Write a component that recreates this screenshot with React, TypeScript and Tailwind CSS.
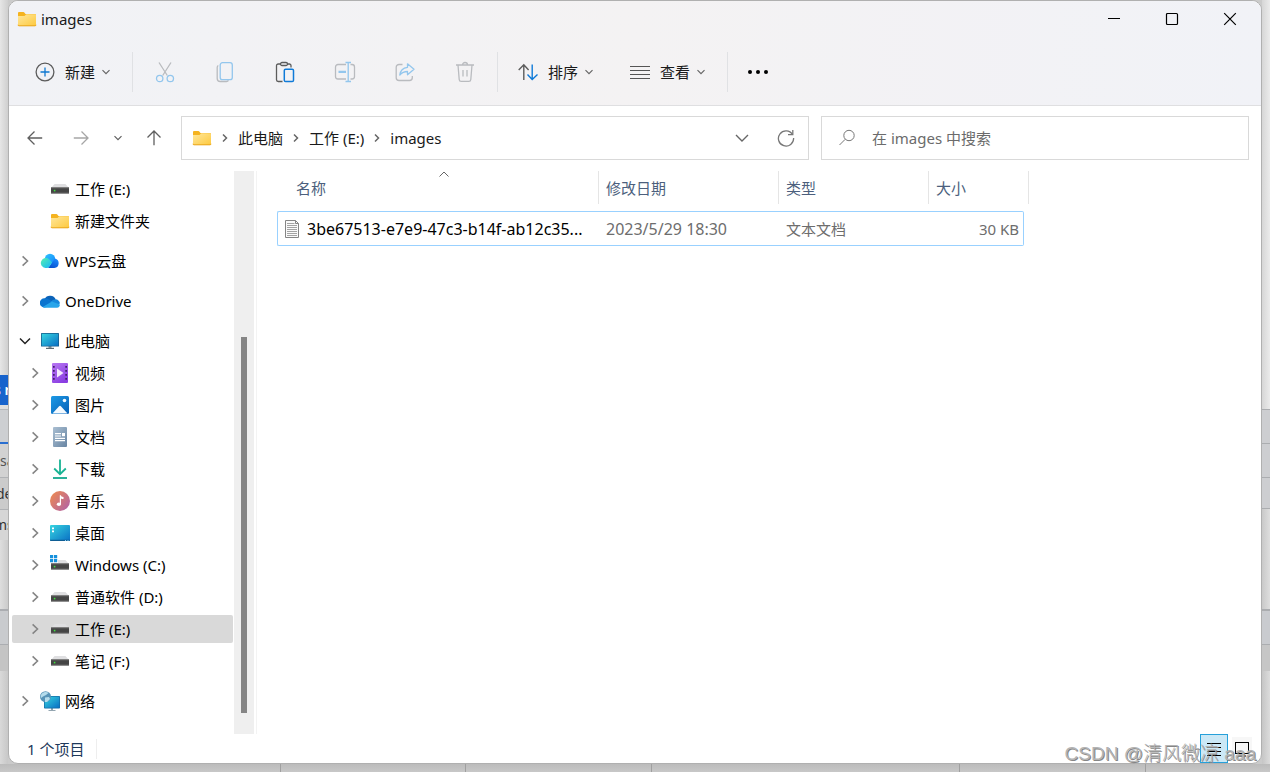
import React from "react";

type IconProps = { className?: string };

const Folder = () => (
  <svg width="20" height="20" viewBox="0 0 20 20" className="shrink-0" aria-hidden="true">
    <defs>
      <linearGradient id="folderFront" x1="0" y1="0" x2="1" y2="1">
        <stop offset="0" stopColor="#ffe79b" />
        <stop offset="1" stopColor="#fdc93f" />
      </linearGradient>
    </defs>
    <path d="M1 4a1 1 0 0 1 1-1h4.5a1 1 0 0 1 .8.4L8.5 5H18a1 1 0 0 1 1 1v4H1z" fill="#f5b31f" />
    <path d="M1 7h6.5l1.8-1.7H18.4a.6.6 0 0 1 .6.6V16a1 1 0 0 1-1 1H2a1 1 0 0 1-1-1z" fill="url(#folderFront)" />
    <path d="M1 15.8a1 1 0 0 0 1 1h16a1 1 0 0 0 1-1" fill="none" stroke="#e9a51c" />
  </svg>
);

const DriveShape = () => (
  <>
    <path d="M4.600 5h10.800L19 9H1z" fill="#dfdfe1" />
    <rect x="1" y="8" width="18" height="7" rx="0.600" fill="#454545" />
    <rect x="1" y="8" width="18" height="1.200" fill="#808080" />
    <rect x="1" y="13.800" width="18" height="1.200" fill="#8f8f8f" />
    <rect x="3.800" y="10.800" width="1.600" height="1.600" fill="#3fe03f" />
  </>
);

const Drive = () => (
  <svg width="20" height="20" viewBox="0 0 20 20" className="shrink-0" aria-hidden="true">
    <DriveShape />
  </svg>
);

const WindowsDrive = () => (
  <svg width="20" height="20" viewBox="0 0 20 20" className="shrink-0" aria-hidden="true">
    <DriveShape />
    <path d="M0 0h8v8H0z" fill="#fff" />
    <path d="M0 0h3.200v3.200H0zM4 0h3.200v3.200H4zM0 4h3.200v3.200H0zM4 4h3.200v3.200H4z" fill="#1590dc" />
  </svg>
);

const WpsCloud = () => (
  <svg width="20" height="20" viewBox="0 0 20 20" className="shrink-0" aria-hidden="true">
    <defs>
      <linearGradient id="wpsTop" x1="0" y1="0" x2="1" y2="1">
        <stop offset="0" stopColor="#30c4ff" />
        <stop offset="1" stopColor="#1285fa" />
      </linearGradient>
      <linearGradient id="wpsLeft" x1="0" y1="0" x2="1" y2="1">
        <stop offset="0" stopColor="#56efb0" />
        <stop offset="1" stopColor="#13b5fb" />
      </linearGradient>
      <linearGradient id="wpsRight" x1="0.8" y1="0" x2="0.3" y2="1">
        <stop offset="0" stopColor="#1b8cff" />
        <stop offset="1" stopColor="#0750cf" />
      </linearGradient>
    </defs>
    <circle cx="10" cy="8" r="5.2" fill="url(#wpsTop)" />
    <path d="M8 17l7-9.6a4.9 4.9 0 0 1-.6 9.6z" fill="url(#wpsRight)" />
    <path d="M5.4 17A5 5 0 1 1 9.3 8.4l2.9 3.2L9 16a3 3 0 0 1-2 1z" fill="url(#wpsLeft)" />
  </svg>
);

const OneDrive = () => (
  <svg width="20" height="20" viewBox="0 0 20 20" className="shrink-0" aria-hidden="true">
    <path d="M4.500 8A6.200 6.200 0 0 1 15.800 8.600L10 12z" fill="#0b62b8" />
    <path d="M4.200 16.500A4.500 4.500 0 0 1 4.600 7.300c1.500-.2 3 .3 4.100 1l6 3.600L7 16z" fill="#0b74cf" />
    <path d="M15 8.400a4.400 4.400 0 0 1 5 4.200L15 14.400 10.500 11c1-1.500 2.600-2.600 4.500-2.600z" fill="#1688dc" />
    <path d="M2.600 16L12 10.400l7.900 3.200A3.200 3.200 0 0 1 17 16.800H4.500a4 4 0 0 1-1.900-.8z" fill="#28a5ea" />
  </svg>
);

const ScreenGradient = ({ id }: { id: string }) => (
  <defs>
    <linearGradient id={id} x1="0" y1="0" x2="1" y2="1">
      <stop offset="0" stopColor="#36d5e0" />
      <stop offset="1" stopColor="#0a6fc4" />
    </linearGradient>
  </defs>
);

const Monitor = () => (
  <svg width="20" height="20" viewBox="0 0 20 20" className="shrink-0" aria-hidden="true">
    <ScreenGradient id="monitor" />
    <path d="M8.500 15h3v2h-3z" fill="#8a959c" />
    <path d="M6 16.800h8v1.200H6z" fill="#5e6a72" />
    <rect x="1" y="2" width="18" height="13.500" rx="0.600" fill="#17608f" />
    <rect x="1.800" y="2.800" width="16.400" height="12" fill="url(#monitor)" />
  </svg>
);

const Video = () => (
  <svg width="20" height="20" viewBox="0 0 20 20" className="shrink-0" aria-hidden="true">
    <defs>
      <linearGradient id="video" x1="0" y1="0" x2="0.600" y2="1">
        <stop offset="0" stopColor="#b878f2" />
        <stop offset="1" stopColor="#8a3ee2" />
      </linearGradient>
    </defs>
    <rect x="2" y="0" width="16" height="20" rx="1" fill="url(#video)" />
    <path
      d="M3 3h1.700v1.700H3zM3 7h1.700v1.700H3zM3 11h1.700v1.700H3zM3 15h1.700v1.700H3zM15.300 3H17v1.700h-1.700zM15.300 7H17v1.700h-1.700zM15.300 11H17v1.700h-1.700zM15.300 15H17v1.700h-1.700z"
      fill="#42206b"
    />
    <path d="M7 5.500v9l6.500-4.500z" fill="#f3e8fc" />
  </svg>
);

const Picture = () => (
  <svg width="20" height="20" viewBox="0 0 20 20" className="shrink-0" aria-hidden="true">
    <defs>
      <linearGradient id="picture" x1="0" y1="0" x2="1" y2="1">
        <stop offset="0" stopColor="#1c9ae6" />
        <stop offset="1" stopColor="#0860b6" />
      </linearGradient>
    </defs>
    <rect x="1" y="1" width="18" height="18" rx="1.500" fill="url(#picture)" />
    <path d="M2.500 18.500l6.600-7.300a1.200 1.200 0 0 1 1.800 0l6.600 7.300z" fill="#f4faff" />
    <circle cx="14.500" cy="5.500" r="1.800" fill="#f4faff" />
  </svg>
);

const DocumentIcon = () => (
  <svg width="20" height="20" viewBox="0 0 20 20" className="shrink-0" aria-hidden="true">
    <defs>
      <linearGradient id="document" x1="0" y1="0" x2="1" y2="1">
        <stop offset="0" stopColor="#aabfd2" />
        <stop offset="1" stopColor="#6885a3" />
      </linearGradient>
    </defs>
    <rect x="3" y="0" width="14" height="20" rx="1" fill="url(#document)" />
    <path d="M5 6h6v1.200H5zM5 8.400h6v1.200H5zM5 10.700h10v1.200H5zM5 13h10v1.200H5zM12 6h3v3.200h-3z" fill="#fff" />
  </svg>
);

const Download = () => (
  <svg width="20" height="20" viewBox="0 0 20 20" className="shrink-0" aria-hidden="true">
    <path d="M10 .500V15M4.200 9.500l5.800 5.700 5.800-5.700" fill="none" stroke="#19b394" strokeWidth="1.800" />
    <path d="M3 19h14" stroke="#14a78e" strokeWidth="1.800" />
  </svg>
);

const Music = () => (
  <svg width="20" height="20" viewBox="0 0 20 20" className="shrink-0" aria-hidden="true">
    <defs>
      <linearGradient id="music" x1="0" y1="0.100" x2="1" y2="0.900">
        <stop offset="0" stopColor="#ee8a50" />
        <stop offset="1" stopColor="#b062a8" />
      </linearGradient>
    </defs>
    <circle cx="10" cy="10" r="10" fill="url(#music)" />
    <ellipse cx="8.900" cy="13.200" rx="2.100" ry="1.800" fill="#fff" />
    <path d="M9.800 4.300h1.200c0 1.300.8 1.700 2.500 1.700v2c-1.100 0-2-.2-2.500-.6v5.800H9.800z" fill="#fff" />
  </svg>
);

const Desktop = () => (
  <svg width="20" height="20" viewBox="0 0 20 20" className="shrink-0" aria-hidden="true">
    <ScreenGradient id="desktop" />
    <rect x="0" y="2" width="20" height="16" rx="1" fill="url(#desktop)" />
    <path d="M2 4.500h2v1.700H2zM2 7.500h2v1.700H2z" fill="#fff" />
    <path d="M0 16.800h20V17a1 1 0 0 1-1 1H1a1 1 0 0 1-1-1z" fill="#0f5e94" />
    <path d="M15 17h1v1h-1zM17.500 17h1v1h-1z" fill="#8fd0f4" />
  </svg>
);

const Network = () => (
  <svg width="20" height="20" viewBox="0 0 20 20" className="shrink-0" aria-hidden="true">
    <ScreenGradient id="network" />
    <path d="M11 17h2v2h2.500v1h-7v-1H11z" fill="#93a5b0" />
    <rect x="4" y="5" width="16" height="12.500" rx="0.800" fill="#146da5" />
    <rect x="4.700" y="5.700" width="14.600" height="11" fill="url(#network)" />
    <circle cx="5.500" cy="5.700" r="5.500" fill="#5794b8" />
    <path d="M2 2.500C4 .500 7 .500 8.500 2L6 4 3 5.500 1 7C.3 5 1 3.500 2 2.500zM5 6.500l4-.5 1 2-3 3H5z" fill="#b4dcec" />
  </svg>
);

const TextFile = () => (
  <svg width="16" height="20" viewBox="0 0 16 20" className="shrink-0" aria-hidden="true">
    <path d="M1.500 1.500h10l3 3v14h-13z" fill="#fafafa" stroke="#858585" />
    <path d="M11.500 1.500v3h3" fill="none" stroke="#858585" />
    <path d="M3 4.500h7.500M3 6.500h10M3 8.500h10M3 10.500h10M3 12.500h10M3 14.500h10M3 16.500h10" stroke="#a3a3a3" />
  </svg>
);

const ChevronDown = ({ className }: IconProps) => (
  <svg width="12" height="12" viewBox="0 0 12 12" className={className} fill="none" stroke="currentColor" aria-hidden="true">
    <path d="M2.500 4.200L6 7.700l3.500-3.500" strokeWidth="1.200" />
  </svg>
);

const ChevronRight = ({ className }: IconProps) => (
  <svg width="12" height="12" viewBox="0 0 12 12" className={className} fill="none" stroke="currentColor" aria-hidden="true">
    <path d="M3.600 1.300L8.500 6l-4.900 4.700" strokeWidth="1.600" />
  </svg>
);

const line = { width: 22, height: 22, viewBox: "0 0 22 22", fill: "none", strokeWidth: 1.3 } as const;

const NewIcon = () => (
  <svg {...line} width={20} height={20} viewBox="0 0 20 20" aria-hidden="true">
    <circle cx="10" cy="10" r="8.900" stroke="#5c5c5c" />
    <path d="M10 5.500v9M5.500 10h9" stroke="#0f78d0" />
  </svg>
);

const CutIcon = () => (
  <svg {...line} aria-hidden="true">
    <path d="M5 1.500l8.300 13M17 1.500l-8.300 13" stroke="#b9bbbf" />
    <circle cx="5.700" cy="17.500" r="3.200" stroke="#93c6ed" />
    <circle cx="16.300" cy="17.500" r="3.200" stroke="#93c6ed" />
  </svg>
);

const CopyIcon = () => (
  <svg {...line} aria-hidden="true">
    <path d="M4.300 4.500c-.8.500-1.100 1.200-1.100 2v11a3 3 0 0 0 3 3h6.300c.9 0 1.600-.4 2-1.100" stroke="#b9bbbf" />
    <rect x="6.200" y="1.700" width="12.100" height="17" rx="2.300" stroke="#93c6ed" />
  </svg>
);

const PasteIcon = () => (
  <svg {...line} aria-hidden="true">
    <path d="M7 3H4.200A1.700 1.700 0 0 0 2.500 4.700v14.100a1.700 1.700 0 0 0 1.700 1.700h4.300M13.500 3h1.800A1.700 1.700 0 0 1 17 4.700v1.800" stroke="#5c5c5c" />
    <rect x="6.500" y="1.500" width="7" height="3" rx="1.500" stroke="#5c5c5c" />
    <rect x="10.300" y="8.200" width="9.200" height="12.300" rx="1.300" stroke="#0f7ad8" strokeWidth="1.500" />
  </svg>
);

const RenameIcon = () => (
  <svg {...line} aria-hidden="true">
    <path d="M12 3.500H4a2.500 2.500 0 0 0-2.500 2.500v9.500A2.500 2.500 0 0 0 4 18h8M16.500 3.500H18a2.500 2.500 0 0 1 2.500 2.500v9.500A2.500 2.500 0 0 1 18 18h-1.500" stroke="#b9bbbf" />
    <path d="M11.500 1.500h5.500M11.500 20.500h5.500M14.200 1.500v19" stroke="#93c6ed" />
    <path d="M4.500 10.800h7.500" stroke="#93c6ed" strokeWidth="2.200" />
  </svg>
);

const ShareIcon = () => (
  <svg {...line} aria-hidden="true">
    <path d="M8.500 3.500H5A2.800 2.800 0 0 0 2.200 6.300v10.400A2.800 2.800 0 0 0 5 19.500h10.500a2.800 2.800 0 0 0 2.800-2.800V15" stroke="#b9bbbf" />
    <path d="M13.500 2.800l6.500 5.500-6.500 5.500v-3.300c-3.300 0-5.500 1-7.700 3.500.5-4.500 3.200-7.200 7.700-7.700z" stroke="#93c6ed" strokeLinejoin="round" />
  </svg>
);

const TrashIcon = () => (
  <svg {...line} stroke="#b9bbbf" aria-hidden="true">
    <path d="M2 4h18M8.500 4a2.500 2.500 0 0 1 5 0M4 4l1.200 14.500a2 2 0 0 0 2 1.900h7.600a2 2 0 0 0 2-1.900l1.200-14.500M9 9v6.500M13 9v6.500" />
  </svg>
);

const SortIcon = () => (
  <svg {...line} width={20} height={20} viewBox="0 0 20 20" strokeWidth={1.4} aria-hidden="true">
    <path d="M5.800 18V3M.700 8l5.100-5.300L10.600 8" stroke="#5c5c5c" />
    <path d="M14.200 2.500V17.500M9.500 12.500l4.700 5 5.300-5" stroke="#0f7ad8" />
  </svg>
);

const ViewIcon = () => (
  <svg {...line} width={20} height={20} viewBox="0 0 20 20" strokeWidth={1} stroke="#555" aria-hidden="true">
    <path d="M0 4.500h20M0 8.500h20M0 12.500h20M0 16.500h20" />
  </svg>
);

const ArrowIcon = ({ className }: IconProps) => (
  <svg width="18" height="18" viewBox="0 0 18 18" className={className} fill="none" stroke="currentColor" strokeWidth="1.300" aria-hidden="true">
    <path d="M16.200 9H2M8.500 2.500L2 9l6.500 6.500" />
  </svg>
);

type NavItem = {
  label: string;
  icon: React.ReactNode;
  nested?: boolean;
  open?: boolean;
  leaf?: boolean;
  selected?: boolean;
};

const groups: NavItem[][] = [
  [
    { label: "工作 (E:)", icon: <Drive />, nested: true, leaf: true },
    { label: "新建文件夹", icon: <Folder />, nested: true, leaf: true },
  ],
  [{ label: "WPS云盘", icon: <WpsCloud /> }],
  [{ label: "OneDrive", icon: <OneDrive /> }],
  [
    { label: "此电脑", icon: <Monitor />, open: true },
    { label: "视频", icon: <Video />, nested: true },
    { label: "图片", icon: <Picture />, nested: true },
    { label: "文档", icon: <DocumentIcon />, nested: true },
    { label: "下载", icon: <Download />, nested: true },
    { label: "音乐", icon: <Music />, nested: true },
    { label: "桌面", icon: <Desktop />, nested: true },
    { label: "Windows (C:)", icon: <WindowsDrive />, nested: true },
    { label: "普通软件 (D:)", icon: <Drive />, nested: true },
    { label: "工作 (E:)", icon: <Drive />, nested: true, selected: true },
    { label: "笔记 (F:)", icon: <Drive />, nested: true },
  ],
  [{ label: "网络", icon: <Network /> }],
];

const NavRow = ({ item }: { item: NavItem }) => (
  <button
    type="button"
    className={`flex h-7 w-full items-center gap-1 rounded-xs text-left ${item.nested ? "pl-3" : "pl-0.5"} ${item.selected ? "bg-[#d9d9d9]" : ""}`}
  >
    <span className="flex w-[22px] shrink-0 justify-center">
      {item.leaf ? null : item.open ? (
        <svg width="12" height="12" viewBox="0 0 12 12" fill="none" stroke="#222" strokeWidth="1.500" aria-hidden="true">
          <path d="M1 3.500l5 5 5-5" />
        </svg>
      ) : (
        <ChevronRight className="text-[#858585]" />
      )}
    </span>
    {item.icon}
    <span className="whitespace-nowrap pl-px">{item.label}</span>
  </button>
);

const Divider = () => <div className="h-10 w-px bg-[#e0e1e4]" />;

const actions = [
  { label: "剪切", icon: <CutIcon /> },
  { label: "复制", icon: <CopyIcon /> },
  { label: "粘贴", icon: <PasteIcon /> },
  { label: "重命名", icon: <RenameIcon /> },
  { label: "共享", icon: <ShareIcon /> },
  { label: "删除", icon: <TrashIcon /> },
];

const MenuButton = ({ label, icon }: { label: string; icon: React.ReactNode }) => (
  <button type="button" className="flex h-10 items-center">
    {icon}
    <span className="ml-2.5">{label}</span>
    <ChevronDown className="ml-[5px] text-[#666]" />
  </button>
);

const TitleBar = () => (
  <div className="flex h-[38px] items-start pl-2">
    <div className="flex h-9 flex-1 items-center gap-1">
      <Folder />
      <h1>images</h1>
    </div>
    <div className="flex pr-0.5">
      <button type="button" aria-label="最小化" className="flex h-9 w-[58px] items-center justify-center">
        <svg width="14" height="14" viewBox="0 0 14 14" aria-hidden="true">
          <path d="M1 6.500h12" stroke="#000" />
        </svg>
      </button>
      <button type="button" aria-label="最大化" className="flex h-9 w-[58px] items-center justify-center">
        <svg width="14" height="14" viewBox="0 0 14 14" aria-hidden="true">
          <rect x="1.500" y="1.500" width="11" height="11" rx="1" fill="none" stroke="#000" strokeWidth="1.200" />
        </svg>
      </button>
      <button type="button" aria-label="关闭" className="flex h-9 w-[58px] items-center justify-center">
        <svg width="14" height="14" viewBox="0 0 14 14" aria-hidden="true">
          <path d="M1.200 1.200l11.600 11.600M12.800 1.200L1.200 12.800" stroke="#000" strokeWidth="1.200" />
        </svg>
      </button>
    </div>
  </div>
);

const Toolbar = () => (
  <div className="flex h-[66px] items-center pl-[26px]">
    <MenuButton label="新建" icon={<NewIcon />} />
    <div className="ml-5 flex items-center gap-0.5">
      <Divider />
      <div className="flex">
        {actions.map((a) => (
          <button key={a.label} type="button" aria-label={a.label} className="flex h-10 w-[60px] items-center justify-center">
            {a.icon}
          </button>
        ))}
      </div>
      <Divider />
    </div>
    <div className="mx-5 flex gap-[35px]">
      <MenuButton label="排序" icon={<SortIcon />} />
      <MenuButton label="查看" icon={<ViewIcon />} />
    </div>
    <Divider />
    <button type="button" aria-label="更多" className="flex h-10 w-[60px] items-center justify-center">
      <svg width="22" height="6" viewBox="0 0 22 6" aria-hidden="true">
        <circle cx="3" cy="3" r="2" />
        <circle cx="11" cy="3" r="2" />
        <circle cx="19" cy="3" r="2" />
      </svg>
    </button>
  </div>
);

const AddressRow = () => (
  <div className="flex items-center pt-2.5 pr-3 pb-[11px] pl-[3px]">
    <button type="button" aria-label="后退" className="flex h-10 w-[46px] items-center justify-center">
      <ArrowIcon className="text-[#5f5f5f]" />
    </button>
    <button type="button" aria-label="前进" className="flex h-10 w-[46px] items-center justify-center">
      <ArrowIcon className="rotate-180 text-[#a6a6a6]" />
    </button>
    <button type="button" aria-label="最近浏览的位置" className="flex h-10 w-7 items-center justify-center">
      <ChevronDown className="text-[#5f5f5f]" />
    </button>
    <button type="button" aria-label="上移" className="flex h-10 w-11 items-center justify-center">
      <ArrowIcon className="rotate-90 text-[#5f5f5f]" />
    </button>
    <nav aria-label="地址" className="ml-[5px] flex h-11 min-w-0 flex-1 items-center border border-[#d9d9d9] pl-2.5">
      <Folder />
      {["此电脑", "工作 (E:)", "images"].map((crumb) => (
        <React.Fragment key={crumb}>
          <span className="flex w-[26px] shrink-0 justify-center text-[#666]">
            <svg width="10" height="10" viewBox="0 0 10 10" fill="none" stroke="currentColor" strokeWidth="1.500" aria-hidden="true">
              <path d="M3 1.500L6.500 5 3 8.500" />
            </svg>
          </span>
          <a href="#" className="whitespace-nowrap">
            {crumb}
          </a>
        </React.Fragment>
      ))}
      <button type="button" aria-label="以前的位置" className="ml-auto flex h-10 w-11 items-center justify-center">
        <svg width="14" height="14" viewBox="0 0 14 14" fill="none" stroke="#666" strokeWidth="1.400" aria-hidden="true">
          <path d="M1 4l6 6 6-6" />
        </svg>
      </button>
      <button type="button" aria-label="刷新" className="flex h-10 w-11 items-center justify-center">
        <svg width="18" height="18" viewBox="0 0 18 18" fill="none" stroke="#777" strokeWidth="1.300" aria-hidden="true">
          <path d="M15.500 5.500A7.600 7.600 0 1 0 16.600 9" />
          <path d="M15.800 1v4.700H11" />
        </svg>
      </button>
    </nav>
    <label className="ml-3 flex h-11 w-[428px] items-center border border-[#d9d9d9] pl-4">
      <span className="sr-only">搜索</span>
      <svg width="18" height="18" viewBox="0 0 18 18" fill="none" stroke="#777" aria-hidden="true">
        <circle cx="11" cy="6.500" r="5.200" />
        <path d="M7.200 10.300L1.500 16" />
      </svg>
      <input
        type="search"
        placeholder="在 images 中搜索"
        className="ml-4 min-w-0 flex-1 bg-transparent outline-none placeholder:text-[#6b6b6b]"
      />
    </label>
  </div>
);

const FileTable = () => (
  <table className="w-[752px] table-fixed border-separate border-spacing-0 text-left">
    <colgroup>
      <col className="w-[322px]" />
      <col className="w-[180px]" />
      <col className="w-[150px]" />
      <col className="w-[95px]" />
      <col className="w-[5px]" />
    </colgroup>
    <thead className="text-[#4c5f7d]">
      <tr>
        <th scope="col" aria-sort="ascending" className="relative p-0 pb-[7px] font-normal">
          <div className="flex h-[33px] items-center border-r border-[#e5e5e5] pl-[19px]">名称</div>
          <svg className="absolute top-0 left-1/2" width="12" height="7" viewBox="0 0 12 7" fill="none" stroke="#666" aria-hidden="true">
            <path d="M1.500 5.500L6 1l4.500 4.500" />
          </svg>
        </th>
        <th scope="col" className="p-0 pb-[7px] font-normal">
          <div className="flex h-[33px] items-center border-r border-[#e5e5e5] pl-[7px]">修改日期</div>
        </th>
        <th scope="col" className="p-0 pb-[7px] font-normal">
          <div className="flex h-[33px] items-center border-r border-[#e5e5e5] pl-[7px]">类型</div>
        </th>
        <th scope="col" colSpan={2} className="p-0 pb-[7px] font-normal">
          <div className="flex h-[33px] items-center border-r border-[#e5e5e5] pl-[7px]">大小</div>
        </th>
      </tr>
    </thead>
    <tbody>
      <tr className="h-[35px] text-[#6d6d6d]">
        <td className="rounded-l-xs border-y border-l border-[#99d1ff] p-0">
          <div className="flex items-center gap-[7px] pl-1.5 text-base leading-5 whitespace-nowrap text-black">
            <TextFile />
            3be67513-e7e9-47c3-b14f-ab12c35...
          </div>
        </td>
        <td className="border-y border-[#99d1ff] p-0 pl-[7px] text-base leading-5">2023/5/29 18:30</td>
        <td className="border-y border-[#99d1ff] p-0 pl-[7px]">文本文档</td>
        <td className="rounded-r-xs border-y border-r border-[#99d1ff] p-0 pr-1 text-right">30 KB</td>
        <td className="p-0" />
      </tr>
    </tbody>
  </table>
);

const StatusBar = () => (
  <div className="flex h-[29px] items-center pr-[9px]">
    <span className="ml-[18px] text-[#1e395b]">1 个项目</span>
    <div className="ml-3 h-5 w-px bg-[#eeeeee]" />
    <button type="button" aria-label="详细信息" className="ml-auto flex h-[29px] w-7 items-center justify-center border border-[#26a0da] bg-[#cbe8f6]">
      <svg width="16" height="16" viewBox="0 0 16 16" aria-hidden="true">
        <path d="M1 2.500h14M1 6.500h14M1 10.500h14M1 14.500h14" stroke="#000" />
      </svg>
    </button>
    <button type="button" aria-label="大缩略图" className="ml-1 flex h-6 w-5 items-center justify-center bg-[#f7f7f7]">
      <svg width="14" height="16" viewBox="0 0 14 16" aria-hidden="true">
        <rect x="0.500" y="1.500" width="13" height="11" fill="none" stroke="#000" />
        <path d="M3 15h8" stroke="#000" />
      </svg>
    </button>
  </div>
);

const LeftBackdrop = () => (
  <div className="flex w-2 shrink-0 flex-col overflow-hidden whitespace-nowrap text-sm text-[#555]">
    <div className="h-[375px] bg-linear-to-r from-[#e6e6e6] to-[#cfcfcf]" />
    <div className="flex h-[30px] items-center bg-[#1763cc] font-semibold text-white">
      <span className="-ml-1.5">s r</span>
    </div>
    <div className="h-1 bg-[#dedede]" />
    <div className="h-[35px] border-t border-b-2 border-t-[#b5b7ba] border-b-[#2a6fd0] bg-[#cdcfd2]" />
    <div className="flex h-[34px] items-center border-b border-[#b0b2b5] bg-[#d2d2d2]">sa</div>
    <div className="flex h-8 items-center border-b border-[#b0b2b5] bg-[#cbcbcb] text-[#333]">
      <span className="-ml-1">de</span>
    </div>
    <div className="flex h-[30px] items-center bg-[#d6d6d6] text-[#333]">
      <span className="-ml-1.5">ms</span>
    </div>
    <div className="h-[69px] bg-linear-to-r from-[#dedede] to-[#cbcbcb]" />
    <div className="h-9 border-t-2 border-b border-[#abadb1] bg-[#c9cbce]" />
    <div className="h-[26px] bg-[#c4c4c4]" />
    <div className="flex-1 bg-linear-to-r from-[#d9d9d9] to-[#c8c8c8]" />
  </div>
);

const RightBackdrop = () => (
  <div className="flex w-2 shrink-0 flex-col">
    <div className="h-[409px] bg-linear-to-l from-[#ebebeb] to-[#d6d6d6]" />
    <div className="h-[34px] border-t border-[#abadb0] bg-[#cdced1]" />
    <div className="h-[34px] border-t border-[#abadb0] bg-[#cdced1]" />
    <div className="h-8 border-y border-[#abadb0] bg-[#cdced1]" />
    <div className="h-[100px] bg-linear-to-l from-[#dedede] to-[#c9c9c9]" />
    <div className="h-9 border-t-2 border-b border-[#abadb0] bg-[#c9cbcf]" />
    <div className="h-[26px] bg-[#c6c6c6]" />
    <div className="flex-1 bg-linear-to-l from-[#dcdcdc] to-[#c6c6c6]" />
  </div>
);

export default function App() {
  return (
    <div className="relative flex min-h-screen flex-col overflow-hidden bg-[#cbcbcb] font-['Noto_Sans','Noto_Sans_CJK_SC',sans-serif] text-[15px] leading-5 text-[#1a1a1a]">
      <div className="flex flex-1">
        <LeftBackdrop />
        <main className="flex min-w-0 flex-1 flex-col overflow-hidden rounded-[10px] border border-[#b0b0b0] bg-white">
          <header className="border-b border-[#dfdfe1] bg-linear-to-r from-[#f1f2f6] via-[#f4f2f3] to-[#f1f2f7]">
            <TitleBar />
            <Toolbar />
          </header>
          <AddressRow />
          <div className="flex flex-1">
            <aside className="flex w-[225px] shrink-0 flex-col gap-3 pt-1 pr-px pl-[3px] text-black">
              {groups.map((items, i) => (
                <div key={i} className="flex flex-col gap-1">
                  {items.map((item) => (
                    <NavRow key={item.label} item={item} />
                  ))}
                </div>
              ))}
            </aside>
            <div className="w-5 shrink-0 bg-[#efefef] pt-[166px] pl-[7px]">
              <div className="h-[376px] w-1.5 bg-[#858585]" />
            </div>
            <div className="ml-0.5 w-px bg-[#f3f3f3]" />
            <section className="min-w-0 flex-1 pl-5">
              <FileTable />
            </section>
          </div>
          <StatusBar />
        </main>
        <RightBackdrop />
      </div>
      <div className="flex h-2 bg-linear-to-b from-[#bcbcbc] to-[#c8c8c8]">
        <div className="w-[281px] border-r border-[#a0a0a0]" />
        <div className="w-[185px] border-r border-[#a0a0a0]" />
        <div className="w-[186px] border-r border-[#a0a0a0]" />
        <div className="w-[308px] border-r border-[#a0a0a0]" />
        <div className="w-[186px] border-r border-[#a0a0a0]" />
      </div>
      <div className="pointer-events-none absolute right-3.5 bottom-1.5 font-['Liberation_Sans','Noto_Sans_CJK_SC',sans-serif] text-[19px] leading-6 font-light whitespace-nowrap text-[#b4b4b4] [text-shadow:1px_1px_0_#858585]">
        CSDN @清风微凉 aaa
      </div>
    </div>
  );
}
